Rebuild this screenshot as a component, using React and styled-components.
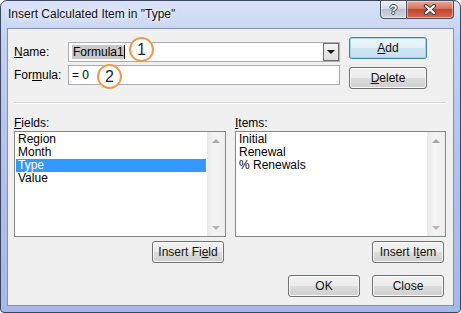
import React from "react";
import styled, { createGlobalStyle } from "styled-components";

const GlobalStyle = createGlobalStyle`
  html, body {
    margin: 0;
    padding: 0;
    background: #ffffff;
  }
  body {
    font-family: "Liberation Sans", Arial, sans-serif;
    font-size: 12px;
    color: #000;
  }
`;

const Window = styled.div`
  width: 461px;
  height: 313px;
  box-sizing: border-box;
  border: 1px solid #3b4660;
  border-radius: 7px 7px 4px 4px;
  background: linear-gradient(
    to bottom,
    #d9e2f7 0%,
    #c5d1f1 12%,
    #b3c2ed 50%,
    #a6b7e9 100%
  );
  padding: 0 6px 6px;
  display: flex;
  flex-direction: column;
`;

const TitleBar = styled.div`
  height: 27px;
  display: flex;
  justify-content: space-between;
  align-items: flex-start;
`;

const TitleText = styled.div`
  padding-left: 1px;
  line-height: 27px;
  font-size: 12px;
  color: #111;
  text-shadow: 0 0 6px #fff, 0 0 10px #fff;
`;

const CaptionButtons = styled.div`
  display: flex;
  margin-top: -1px;
`;

const CaptionButton = styled.div`
  width: ${(p) => (p.$close ? "47px" : "27px")};
  height: 19px;
  box-sizing: border-box;
  border: 1px solid #4a4f5e;
  border-left: ${(p) => (p.$close ? "none" : "1px solid #4a4f5e")};
  border-radius: ${(p) => (p.$close ? "0 0 4px 0" : "0 0 0 4px")};
  background: ${(p) =>
    p.$close
      ? "linear-gradient(#e6a898 0%, #d7735f 45%, #c4432a 50%, #d46a52 100%)"
      : "linear-gradient(#eef1f7 0%, #d3d9e5 45%, #b9c1d1 50%, #d3d9e4 100%)"};
  box-shadow: inset 0 0 0 1px rgba(255, 255, 255, 0.45);
  display: flex;
  align-items: center;
  justify-content: center;
  font-weight: bold;
  font-size: 13px;
  color: #fff;
  text-shadow: -1px 0 #3a3f4c, 1px 0 #3a3f4c, 0 -1px #3a3f4c, 0 1px #3a3f4c;
`;

const Client = styled.div`
  flex: 1;
  position: relative;
  border: 1px solid #8290b6;
  background: #f0f0f0;
  display: flex;
  flex-direction: column;
`;

const TopSection = styled.div`
  display: flex;
  padding-left: 6px;
`;

const FieldsGrid = styled.div`
  padding-top: 13px;
  display: grid;
  grid-template-columns: 54px 272px;
  grid-auto-rows: 20px;
  row-gap: 3px;
  align-items: center;
`;

const Label = styled.div`
  font-size: 12px;
  line-height: 16px;
  color: #000;
`;

const TextBox = styled.div`
  height: 20px;
  box-sizing: border-box;
  border: 1px solid #abadb3;
  background: #fff;
  display: flex;
  align-items: center;
  padding-left: 3px;
  font-size: 12px;
`;

const Selected = styled.span`
  background: #c8c8c8;
  line-height: 14px;
  padding-left: 1px;
`;

const Caret = styled.span`
  display: inline-block;
  width: 1px;
  height: 14px;
  background: #000;
`;

const DropButton = styled.div`
  margin-left: auto;
  width: 16px;
  height: 18px;
  box-sizing: border-box;
  border: 1px solid #6e6e6e;
  background: linear-gradient(#f4f4f4, #dcdcdc);
  display: flex;
  align-items: center;
  justify-content: center;
  &::after {
    content: "";
    border-left: 4px solid transparent;
    border-right: 4px solid transparent;
    border-top: 4px solid #000;
  }
`;

const ButtonCol = styled.div`
  margin-left: 9px;
  padding-top: 8px;
  display: flex;
  flex-direction: column;
  gap: 8px;
`;

const Button = styled.div`
  width: ${(p) => p.$w || 72}px;
  height: 22px;
  box-sizing: border-box;
  border: 1px solid ${(p) => (p.$default ? "#3c7fb1" : "#707070")};
  border-radius: 3px;
  background: ${(p) =>
    p.$default
      ? "linear-gradient(#eef6fb 0%, #e2eef7 50%, #d0e5f3 50%, #c6def0 100%)"
      : "linear-gradient(#f2f2f2 0%, #ebebeb 50%, #dddddd 50%, #cfcfcf 100%)"};
  box-shadow: inset 0 0 0 1px ${(p) => (p.$default ? "#9fdcf7" : "#fbfbfb")};
  display: flex;
  align-items: center;
  justify-content: center;
  font-size: 12px;
  color: #111;
  align-self: ${(p) => (p.$end ? "flex-end" : "auto")};
  margin-top: ${(p) => (p.$end ? "4px" : "0")};
  margin-right: ${(p) => (p.$end ? "2px" : "0")};
`;

const Separator = styled.div`
  margin: 13px 7px 0 6px;
  border-top: 1px solid #d5d5d5;
  border-bottom: 1px solid #ffffff;
`;

const ListsSection = styled.div`
  margin-top: 11px;
  padding: 0 7px 0 6px;
  display: grid;
  grid-template-columns: 212px 211px;
  column-gap: 9px;
`;

const Column = styled.div`
  display: flex;
  flex-direction: column;
`;

const ListBox = styled.div`
  height: 106px;
  box-sizing: border-box;
  border: 1px solid #828790;
  background: #fff;
  display: flex;
`;

const Rows = styled.div`
  flex: 1;
  padding: 1px;
`;

const Row = styled.div`
  height: 13px;
  line-height: 13px;
  padding-left: 2px;
  font-size: 12px;
  background: ${(p) => (p.$selected ? "#3399ff" : "transparent")};
  color: ${(p) => (p.$selected ? "#fff" : "#000")};
`;

const ScrollBar = styled.div`
  width: 18px;
  background: linear-gradient(to right, #e9e9e9, #f4f4f4 40%, #eeeeee);
  display: flex;
  flex-direction: column;
  justify-content: space-between;
`;

const Arrow = styled.div`
  height: 17px;
  display: flex;
  align-items: center;
  justify-content: center;
  &::after {
    content: "";
    border-left: 4px solid transparent;
    border-right: 4px solid transparent;
    ${(p) =>
      p.$down ? "border-top: 4px solid #b4b4b4;" : "border-bottom: 4px solid #a8a8a8;"}
  }
`;

const BottomRow = styled.div`
  margin-top: 12px;
  padding-right: 9px;
  display: flex;
  justify-content: flex-end;
  gap: 12px;
`;

const Badge = styled.div`
  position: absolute;
  left: ${(p) => p.$x}px;
  top: ${(p) => p.$y}px;
  width: 25px;
  height: 25px;
  box-sizing: border-box;
  border: 2.5px solid #f29a48;
  border-radius: 50%;
  background: #fff;
  display: flex;
  align-items: center;
  justify-content: center;
  font-size: 16px;
  color: #1c2440;
`;

function ListPanel({ items, selected }) {
  return (
    <ListBox>
      <Rows>
        {items.map((it) => (
          <Row key={it} $selected={it === selected}>
            {it}
          </Row>
        ))}
      </Rows>
      <ScrollBar>
        <Arrow />
        <Arrow $down />
      </ScrollBar>
    </ListBox>
  );
}

export default function App() {
  return (
    <>
      <GlobalStyle />
      <Window>
        <TitleBar>
          <TitleText>Insert Calculated Item in "Type"</TitleText>
          <CaptionButtons>
            <CaptionButton>?</CaptionButton>
            <CaptionButton $close>
              <svg width="14" height="11" viewBox="0 0 14 11">
                <path d="M3 2 L11 9 M11 2 L3 9" stroke="#3a3f4c" strokeWidth="4.2" strokeLinecap="round" />
                <path d="M3 2 L11 9 M11 2 L3 9" stroke="#fff" strokeWidth="2.2" strokeLinecap="round" />
              </svg>
            </CaptionButton>
          </CaptionButtons>
        </TitleBar>
        <Client>
          <TopSection>
            <FieldsGrid>
              <Label>
                <u>N</u>ame:
              </Label>
              <TextBox>
                <Selected>Formula1</Selected>
                <Caret />
                <DropButton />
              </TextBox>
              <Label>
                For<u>m</u>ula:
              </Label>
              <TextBox>= 0</TextBox>
            </FieldsGrid>
            <ButtonCol>
              <Button $w={78} $default>
                <u>A</u>dd
              </Button>
              <Button $w={78}>
                <u>D</u>elete
              </Button>
            </ButtonCol>
          </TopSection>
          <Separator />
          <ListsSection>
            <Column>
              <Label>
                <u>F</u>ields:
              </Label>
              <ListPanel items={["Region", "Month", "Type", "Value"]} selected="Type" />
              <Button $end>
                Insert Fi<u>e</u>ld
              </Button>
            </Column>
            <Column>
              <Label>
                <u>I</u>tems:
              </Label>
              <ListPanel items={["Initial", "Renewal", "% Renewals"]} />
              <Button $end>
                Insert I<u>t</u>em
              </Button>
            </Column>
          </ListsSection>
          <BottomRow>
            <Button>OK</Button>
            <Button>Close</Button>
          </BottomRow>
          <Badge $x={121} $y={8}>1</Badge>
          <Badge $x={89} $y={35}>2</Badge>
        </Client>
      </Window>
    </>
  );
}
